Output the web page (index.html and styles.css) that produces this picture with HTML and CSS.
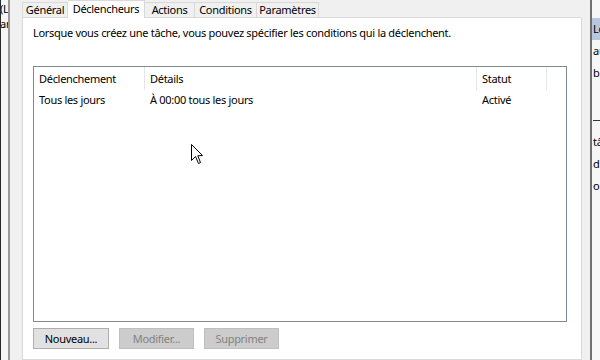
FILE: index.html
```html
<!DOCTYPE html>
<html lang="fr">
<head>
<meta charset="utf-8">
<link rel="stylesheet" href="styles.css">
</head>
<body>
<div class="screen">
  <div class="bgwin left">
    <div class="bl">(L</div>
    <div class="bl">ar</div>
  </div>
  <div class="dialog">
    <div class="tabs">
      <div class="tab t1">Général</div>
      <div class="tab t2 sel">Déclencheurs</div>
      <div class="tab t3">Actions</div>
      <div class="tab t4">Conditions</div>
      <div class="tab t5">Paramètres</div>
    </div>
    <div class="panel">
      <p class="desc">Lorsque vous créez une tâche, vous pouvez spécifier les conditions qui la déclenchent.</p>
      <div class="list">
        <div class="row head">
          <div class="c c1">Déclenchement</div>
          <div class="c c2">Détails</div>
          <div class="c c3">Statut</div>
        </div>
        <div class="row">
          <div class="c c1">Tous les jours</div>
          <div class="c c2">À 00:00 tous les jours</div>
          <div class="c c3">Activé</div>
        </div>
      </div>
      <div class="buttons">
        <button class="btn">Nouveau...</button>
        <button class="btn dis">Modifier...</button>
        <button class="btn dis">Supprimer</button>
      </div>
    </div>
  </div>
  <div class="bgwin right">
    <div class="rl hl">Lo</div>
    <div class="rl">au</div>
    <div class="rl">b</div>
    <div class="rl dash"></div>
    <div class="rl">tâ</div>
    <div class="rl">d</div>
    <div class="rl">o</div>
  </div>
  <svg class="cursor" width="13" height="21" viewBox="0 0 13 21">
    <path d="M0.5 0.5 L0.5 16.5 L4.5 12.5 L7.5 19.5 L9.5 18.5 L6.8 11.8 L11.5 11.5 Z" fill="#fff" stroke="#000" stroke-width="1" stroke-linejoin="miter"/>
  </svg>
</div>
</body>
</html>
```

FILE: styles.css
```css
* { box-sizing: border-box; }
html, body { margin: 0; padding: 0; }
body {
  width: 600px;
  height: 360px;
  overflow: hidden;
  font-family: "Noto Sans", "Open Sans", sans-serif;
  font-size: 11px;
  letter-spacing: -0.3px;
  color: #000;
  background: #fff;
}
.screen {
  position: relative;
  display: flex;
  width: 600px;
  height: 360px;
  overflow: hidden;
}
.bgwin {
  background: #f6f6f6;
  overflow: hidden;
  white-space: nowrap;
  font-size: 11px;
  letter-spacing: -0.2px;
}
.left {
  width: 10px;
  border-left: 1px solid #2a2a2a;
  border-right: 2px solid #9a9a9a;
  line-height: 15px;
}
.left .bl { margin-left: -1px; }
.left .bl:first-child { margin-top: 1px; }
.right {
  width: 10px;
  border-left: 2px solid #6e6e6e;
  padding-top: 18px;
}
.right .rl {
  height: 22px;
  line-height: 22px;
  padding-left: 1px;
}
.right .hl {
  background: #b7c8dc;
}
.right .dash {
  height: 47px;
  position: relative;
}
.right .dash::after {
  content: "";
  position: absolute;
  left: 1px;
  top: 36px;
  width: 8px;
  height: 1px;
  background: #333;
}
.dialog {
  flex: 1;
  background: #f0f0f0;
  padding: 0 8px 0 12px;
  display: flex;
  flex-direction: column;
}
.tabs {
  display: flex;
  height: 17px;
  align-items: flex-end;
  position: relative;
  z-index: 1;
}
.tab {
  height: 15px;
  line-height: 14px;
  border: 1px solid #d9d9d9;
  border-bottom: none;
  border-left: none;
  background: #f0f0f0;
  padding: 0;
  text-align: center;
  white-space: nowrap;
}
.t1 { width: 46px; border-left: 1px solid #d9d9d9; }
.t2 { width: 77px; }
.t3 { width: 50px; }
.t4 { width: 62px; }
.t5 { width: 62px; }
.tab.sel {
  height: 18px;
  background: #fff;
  line-height: 15px;
  margin-bottom: -1px;
  padding-bottom: 1px;
}
.panel {
  flex: 1;
  background: #fff;
  border: 1px solid #d9d9d9;
  padding: 7px 14px 0 10px;
}
.desc {
  margin: 0;
  line-height: 16px;
  height: 16px;
  white-space: nowrap;
}
.list {
  margin-top: 25px;
  height: 256px;
  border: 1px solid #828790;
  background: #fff;
}
.row {
  display: flex;
  height: 19px;
  line-height: 19px;
}
.row.head {
  height: 23px;
  line-height: 24px;
}
.c {
  padding-left: 5px;
  white-space: nowrap;
}
.c1 { width: 111px; }
.c2 { width: 332px; }
.c3 { width: 70px; }
.head .c { border-right: 1px solid #e5e5e5; }
.buttons {
  display: flex;
  gap: 10px;
  margin-top: 6px;
}
.btn {
  width: 76px;
  height: 21px;
  font-family: inherit;
  font-size: 11px;
  letter-spacing: -0.3px;
  color: #000;
  background: #e1e1e1;
  border: 1px solid #adadad;
  padding: 0;
  margin: 0;
  line-height: 17px;
}
.btn.dis {
  width: 75px;
  background: #cccccc;
  border-color: #bfbfbf;
  color: #838383;
}
.cursor {
  position: absolute;
  left: 191px;
  top: 144px;
}
```
